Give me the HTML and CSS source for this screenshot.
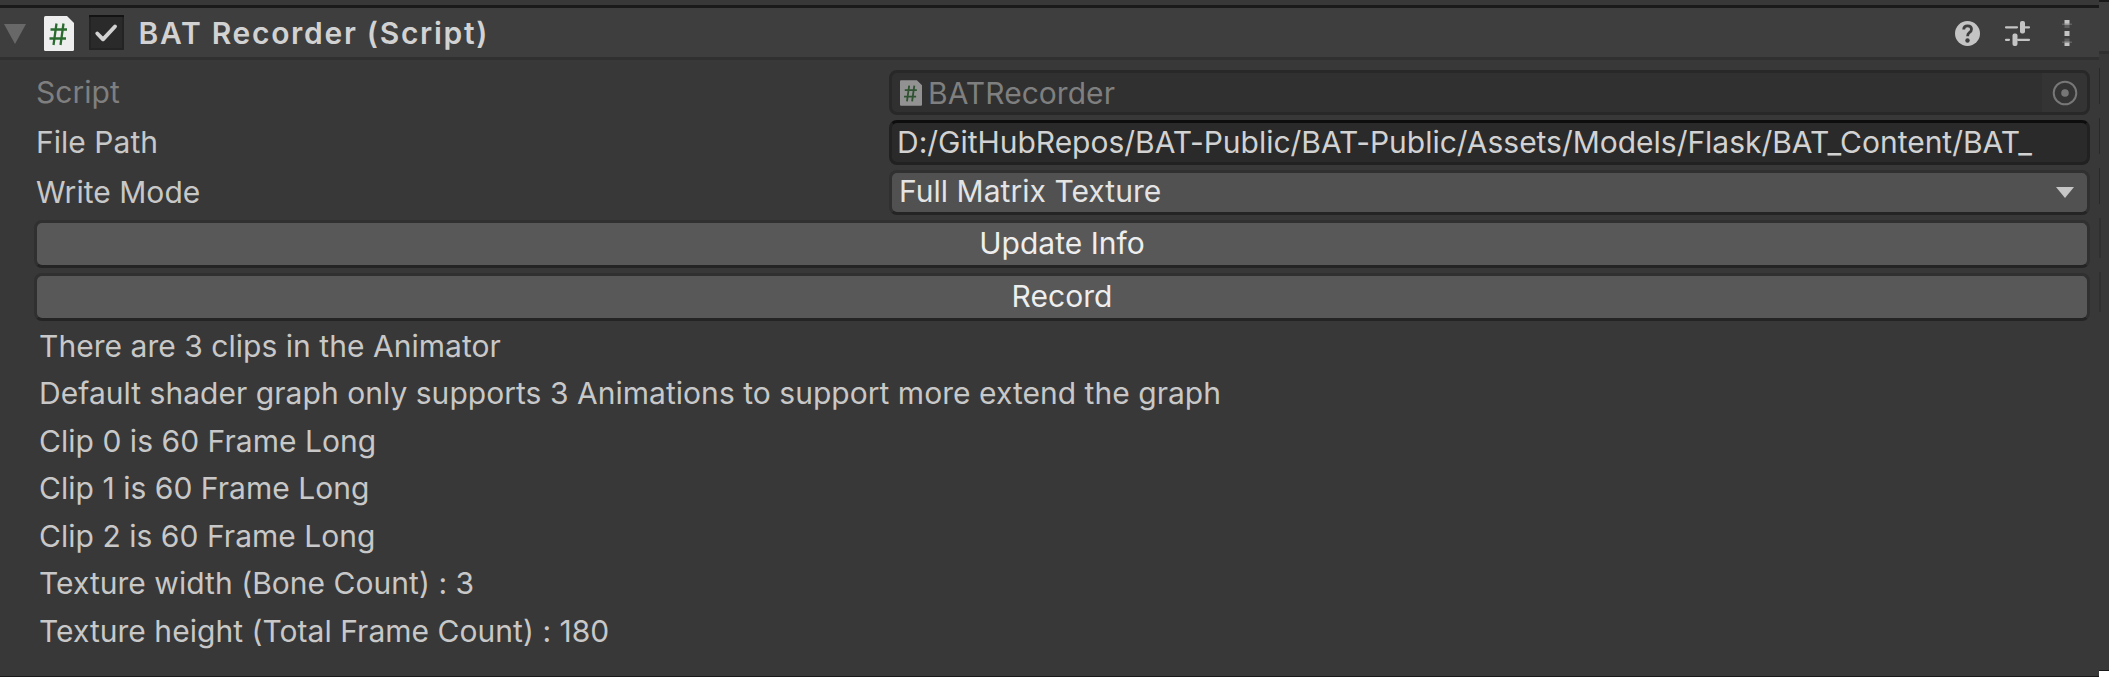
FILE: index.html
```html
<!DOCTYPE html>
<html lang="en">
<head>
<meta charset="utf-8">
<title>BAT Recorder</title>
<link rel="stylesheet" href="styles.css">
</head>
<body>
<div class="window">
  <main class="inspector">
    <header class="header">
      <svg class="foldout" width="22" height="20" viewBox="0 0 22 20"><path d="M0 0H22L11 20Z" fill="#686868"/></svg>
      <svg class="script-icon" width="30" height="35" viewBox="0 0 30 35"><path d="M1.500 0H23L30 7V33.500Q30 35 28.500 35H1.500Q0 35 0 33.500V1.500Q0 0 1.500 0Z" fill="#eee"/><path d="M12.500 7.500L9.500 29M19.500 7.500L16.500 29M6.500 13.500H23M5.500 22.500H22" stroke="#2c6b30" stroke-width="2.300" fill="none"/></svg>
      <span class="checkbox"><svg width="35" height="35" viewBox="0 0 35 35"><path d="M8.300 18.500L14 24.300L26 11.500" fill="none" stroke="#d2d2d2" stroke-width="3.900" stroke-linecap="round" stroke-linejoin="round"/></svg></span>
      <h1 class="title">BAT Recorder (Script)</h1>
      <div class="actions">
        <svg width="25" height="25" viewBox="0 0 25 25"><circle cx="12.500" cy="12.500" r="12.500" fill="#c4c4c4"/><path d="M8.700 8.500Q8.800 4.800 12.600 4.800Q16.500 4.800 16.500 8.200Q16.500 10.200 14.300 11.700Q12.600 12.900 12.600 15.200" fill="none" stroke="#3e3e3e" stroke-width="2.800"/><circle cx="12.500" cy="19.500" r="2.200" fill="#3e3e3e"/></svg>
        <svg width="25" height="25" viewBox="0 0 25 25"><path d="M1 6.300H12M20 6.300H24M1 18.800H4M13 18.800H24" stroke="#c4c4c4" stroke-width="2.200" stroke-linecap="round"/><rect x="15" y="0" width="5" height="12.500" rx="2" fill="#c4c4c4"/><rect x="7.500" y="12.500" width="5" height="12.500" rx="2" fill="#c4c4c4"/></svg>
        <svg width="10" height="27" viewBox="0 0 10 27"><path d="M2.500 0H7.500V5H2.500ZM2.500 11H7.500V16H2.500ZM2.500 21.500H7.500V26H2.500Z" fill="#c4c4c4"/><path d="M2.500 5H7.500V8H2.500ZM2.500 18.500H7.500V21.500H2.500ZM0 3.500H10V5H0ZM0 21.500H10V23H0Z" fill="#777" opacity=".6"/></svg>
      </div>
    </header>
    <section class="properties">
      <div class="row disabled">
        <span class="label">Script</span>
        <div class="field object-field">
          <svg class="object-icon" width="22" height="26" viewBox="0 0 30 35"><path d="M1.500 0H23L30 7V33.500Q30 35 28.500 35H1.500Q0 35 0 33.500V1.500Q0 0 1.500 0Z" fill="#929292"/><path d="M12.500 7.500L9.500 29M19.500 7.500L16.500 29M6.500 13.500H23M5.500 22.500H22" stroke="#2f5231" stroke-width="2.500" fill="none"/></svg>
          <span class="object-name">BATRecorder</span>
          <span class="picker"><svg width="26" height="26" viewBox="0 0 26 26"><circle cx="13" cy="13" r="11.300" fill="none" stroke="#777" stroke-width="2"/><circle cx="13" cy="13" r="3.800" fill="#777"/></svg></span>
        </div>
      </div>
      <div class="row">
        <span class="label">File Path</span>
        <div class="field text-field">D:/GitHubRepos/BAT-Public/BAT-Public/Assets/Models/Flask/BAT_Content/BAT_</div>
      </div>
      <div class="row">
        <span class="label">Write Mode</span>
        <div class="field dropdown"><span class="value">Full Matrix Texture</span><svg width="18" height="11" viewBox="0 0 18 11"><path d="M0 0H18L9 11Z" fill="#c6c6c6"/></svg></div>
      </div>
      <button class="button">Update Info</button>
      <button class="button">Record</button>
    </section>
    <section class="info">
      <p>There are 3 clips in the Animator</p>
      <p>Default shader graph only supports 3 Animations to support more extend the graph</p>
      <p>Clip 0 is 60 Frame Long</p>
      <p>Clip 1 is 60 Frame Long</p>
      <p>Clip 2 is 60 Frame Long</p>
      <p>Texture width (Bone Count) : 3</p>
      <p>Texture height (Total Frame Count) : 180</p>
    </section>
  </main>
  <aside class="edge">
    <div class="edge-header"></div>
    <div class="edge-body"><i></i><i></i><i></i><i class="tall"></i><i class="tall"></i></div>
    <div class="edge-corner"></div>
  </aside>
</div>
</body>
</html>
```
FILE: styles.css
```css
* { box-sizing: border-box; }
body {
  margin: 0;
  background: #383838;
  color: #c8c8c8;
  font: 400 30px/45px Inter, "Liberation Sans", sans-serif;
  letter-spacing: 0.035px;
  white-space: nowrap;
}
svg { display: block; flex: none; }
.window { display: flex; width: 2109px; height: 677px; overflow: hidden; }
.inspector {
  width: 2099px;
  padding-top: 5px;
  border-bottom: 1px solid #191919;
}
.header {
  display: flex;
  align-items: center;
  height: 55px;
  padding-left: 4px;
  border-top: 3px solid #1a1a1a;
  border-bottom: 3px solid #303030;
  background: #3e3e3e;
}
.foldout { margin-top: 2px; }
.script-icon { margin: 1px 0 0 18px; }
.checkbox {
  margin-left: 15px;
  border-radius: 1px;
  background: #2a2a2a;
  box-shadow: inset 0 2px #131313, inset 0 0 0 2px #232323;
}
.title {
  margin: 0 0 0 14.500px;
  padding-top: 2px;
  color: #d2d2d2;
  font-size: 30px;
  font-weight: 600;
  line-height: 47px;
  letter-spacing: 1.700px;
}
.actions {
  display: flex;
  align-items: center;
  gap: 25px;
  margin-left: auto;
  padding: 1px 27px 0 0;
}
.actions svg:last-child { margin-left: 7px; }
.properties {
  display: flex;
  flex-direction: column;
  gap: 5px;
  padding: 10px 9px 0 34px;
}
.row { display: flex; height: 45px; }
.label { width: 855px; padding-left: 2px; }
.disabled { color: #7f7f7f; }
.field {
  display: flex;
  flex: 1;
  border: 3px solid #212121;
  border-radius: 8px;
  line-height: 39px;
}
.object-field { align-items: center; background: #303030; border-color: #282828; padding-left: 8px; }
.object-name { margin-left: 6px; padding-top: 1px; }
.picker {
  display: flex;
  align-items: center;
  align-self: stretch;
  margin-left: auto;
  padding: 0 9px 0 10px;
  border-radius: 0 5px 5px 0;
  background: #343434;
}
.text-field {
  padding-left: 5px;
  border-top-color: #0d0d0d;
  background: #2a2a2a;
  color: #d2d2d2;
  letter-spacing: -0.020px;
}
.dropdown {
  align-items: center;
  justify-content: space-between;
  padding: 0 13px 0 7px;
  border-color: #303030 #303030 #242424;
  background: #515151;
  color: #e4e4e4;
}
.value { padding-bottom: 2px; line-height: 37px; }
.button {
  height: 48px;
  padding: 0 0 1px;
  border: 3px solid #303030;
  border-bottom-color: #242424;
  border-radius: 8px;
  background: #585858;
  color: #eee;
  font: inherit;
  line-height: 41px;
  letter-spacing: inherit;
}
.info { padding: 1.500px 0 0 39px; line-height: 47.500px; }
.info p { margin: 0; }
.edge { display: flex; flex-direction: column; width: 10px; }
.edge-header {
  height: 54px;
  border-top: 2px solid #1a1a1a;
  border-bottom: 3px solid #303030;
  background: #3e3e3e;
}
.edge-body { display: flex; flex: 1; flex-direction: column; gap: 14px; padding-top: 14px; }
.edge-body i { width: 1px; height: 36px; background: #292929; }
.edge-body .tall { width: 2px; height: 40px; background: #303030; }
.edge-corner { height: 7px; border-top: 1px solid #191919; background: #fff; }
```
